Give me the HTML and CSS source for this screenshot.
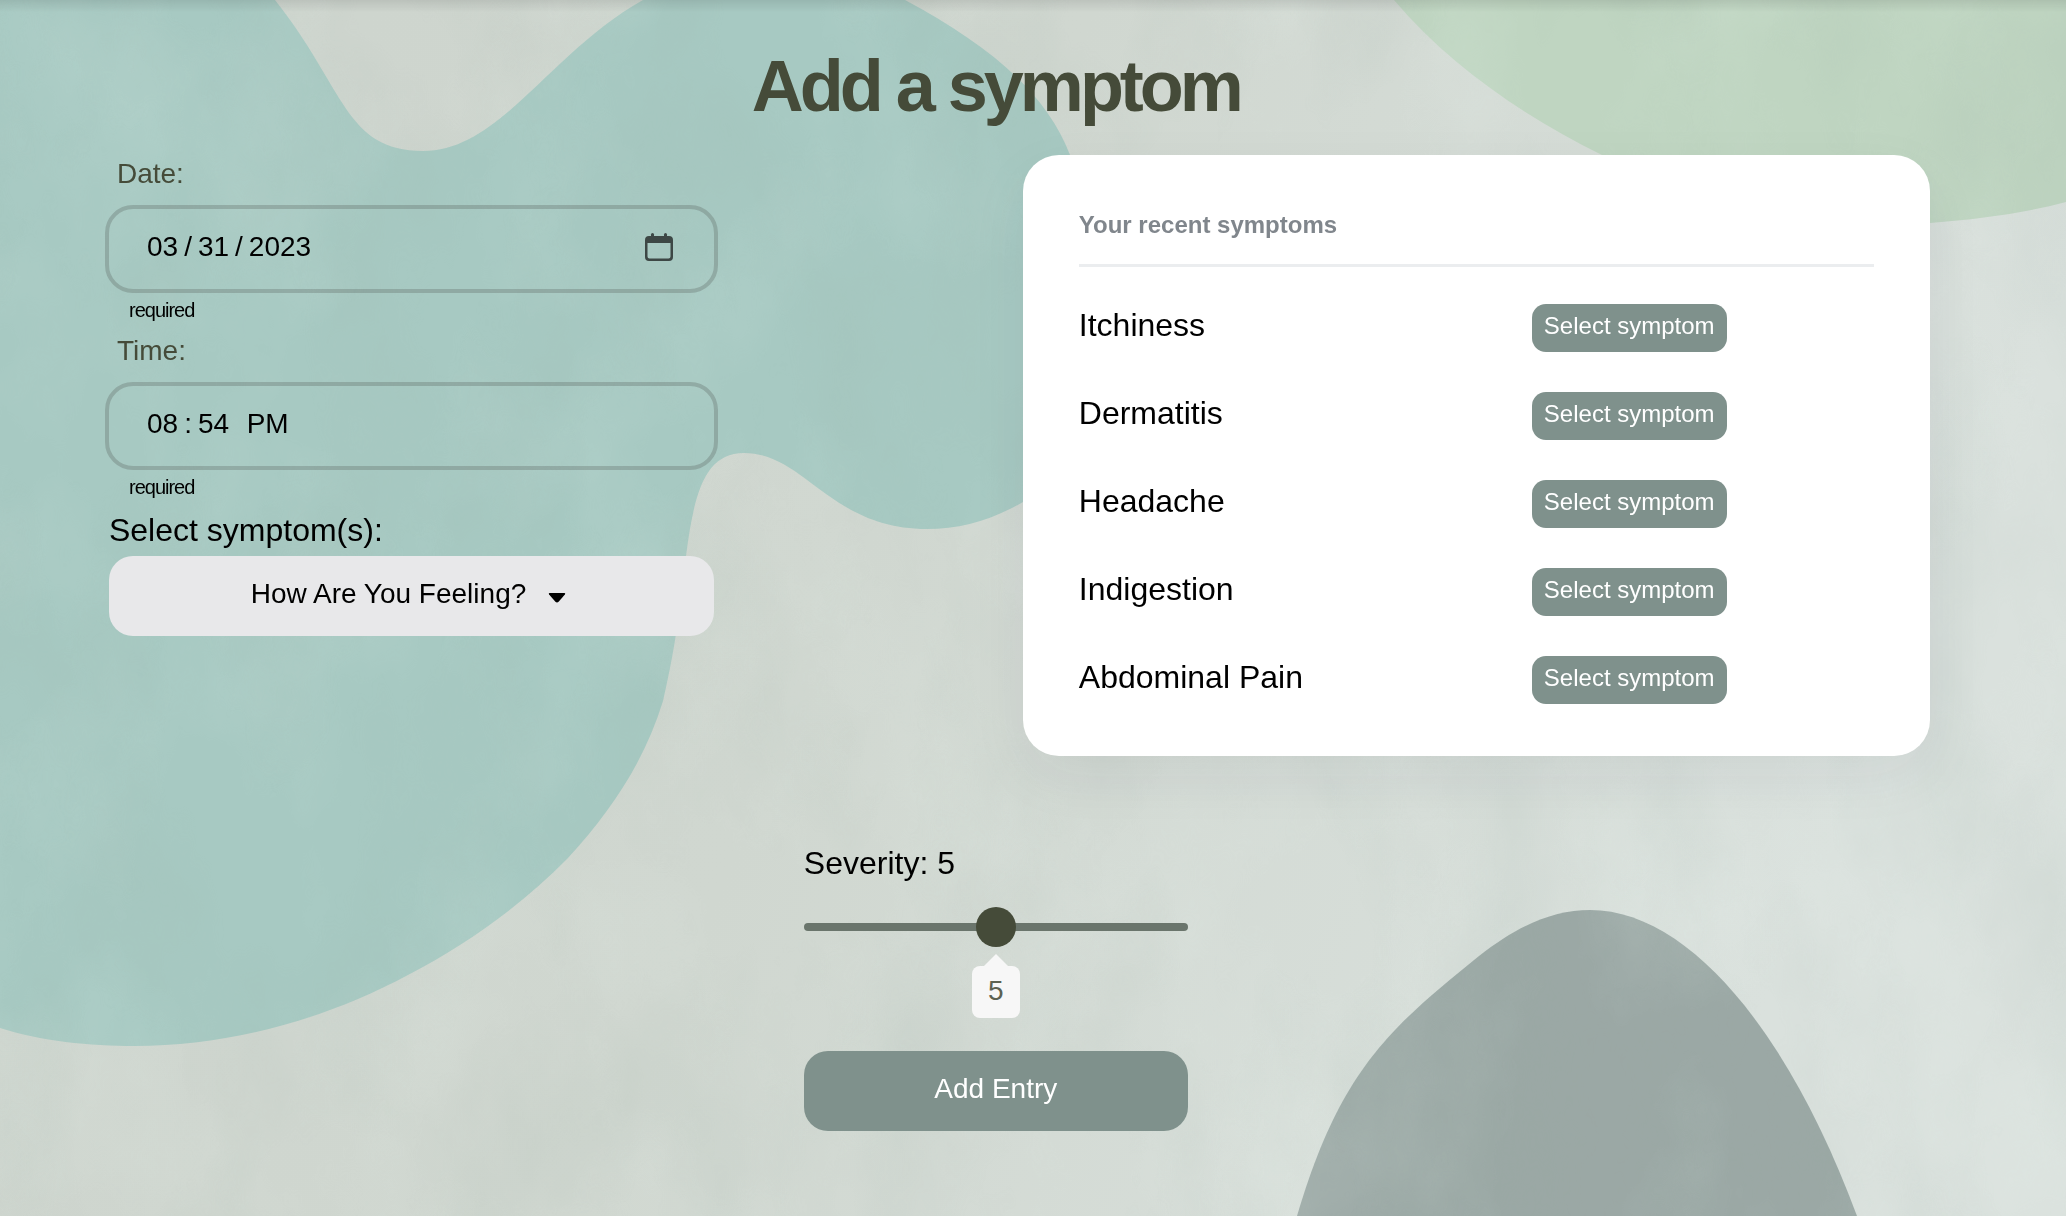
FILE: index.html
```html
<!DOCTYPE html>
<html lang="en">
<head>
<meta charset="utf-8">
<meta name="viewport" content="width=device-width, initial-scale=1">
<title>Add a symptom</title>
<link rel="stylesheet" href="styles.css">
</head>
<body>
<svg class="backdrop" viewBox="0 0 2066 1216" preserveAspectRatio="xMidYMid slice" aria-hidden="true">
  <defs>
    <linearGradient id="paper" x1="0" y1="0" x2="1" y2="0.25">
      <stop offset="0" stop-color="#cdd4cd"/>
      <stop offset="0.5" stop-color="#d0d7d0"/>
      <stop offset="1" stop-color="#dae1dd"/>
    </linearGradient>
    <filter id="lightWash" x="0" y="0" width="100%" height="100%">
      <feTurbulence type="fractalNoise" baseFrequency="0.006 0.004" numOctaves="5" seed="8"/>
      <feColorMatrix values="0 0 0 0 0.9  0 0 0 0 1  0 0 0 0 0.95  1.6 0 0 0 -0.7"/>
    </filter>
    <filter id="darkWash" x="0" y="0" width="100%" height="100%">
      <feTurbulence type="fractalNoise" baseFrequency="0.007 0.004" numOctaves="5" seed="21"/>
      <feColorMatrix values="0 0 0 0 0.3  0 0 0 0 0.4  0 0 0 0 0.35  0 1.2 0 0 -0.5"/>
    </filter>
  </defs>
  <rect width="2066" height="1216" fill="url(#paper)"/>
  <path fill="#a7c9c2" d="M0 0H275C345 88 345 151 423 151C500 151 550 52 643 0H905C985 43 1045 90 1070 155C1130 300 1100 440 1023 502C990 521 960 529 927 529C830 529 805 453 744 453C704 453 694 495 686 556C679 612 677 640 663 701C645 760 612 810 568 858C520 907 465 945 408 975C320 1022 225 1046 135 1046C90 1046 40 1041 0 1028Z"/>
  <path fill="#bfd5c1" d="M1394 0C1450 66 1525 117 1602 155C1700 205 1830 238 1930 223C1980 219 2025 213 2066 202V0Z"/>
  <path fill="#9ba8a5" d="M1297 1216C1340 1070 1390 1028 1479 956C1520 924 1555 910 1590 910C1690 910 1790 1035 1857 1216Z"/>
  <rect width="2066" height="1216" filter="url(#lightWash)" opacity="0.16"/>
  <rect width="2066" height="1216" filter="url(#darkWash)" opacity="0.2"/>
</svg>

<main class="page">
  <h1 class="title">Add a symptom</h1>
  <form class="entry">
    <div class="columns">
      <div class="fields">
        <div class="field">
          <label class="field-label" for="date">Date:</label>
          <input class="field-input" id="date" type="date" value="2023-03-31" required aria-describedby="date-note">
          <p class="field-note" id="date-note">required</p>
        </div>
        <div class="field">
          <label class="field-label" for="time">Time:</label>
          <input class="field-input" id="time" type="time" value="20:54" required aria-describedby="time-note">
          <p class="field-note" id="time-note">required</p>
        </div>
        <div class="picker">
          <label class="picker-label" for="symptom">Select symptom(s):</label>
          <select class="picker-select" id="symptom">
            <option>How Are You Feeling?</option>
          </select>
        </div>
      </div>

      <section class="card">
        <h2 class="card-title">Your recent symptoms</h2>
        <ul class="recent">
          <li class="recent-row"><span>Itchiness</span><button class="pick" type="button">Select symptom</button></li>
          <li class="recent-row"><span>Dermatitis</span><button class="pick" type="button">Select symptom</button></li>
          <li class="recent-row"><span>Headache</span><button class="pick" type="button">Select symptom</button></li>
          <li class="recent-row"><span>Indigestion</span><button class="pick" type="button">Select symptom</button></li>
          <li class="recent-row"><span>Abdominal Pain</span><button class="pick" type="button">Select symptom</button></li>
        </ul>
      </section>
    </div>

    <div class="severity">
      <label class="severity-label" for="severity">Severity: 5</label>
      <input class="slider" id="severity" type="range" min="0" max="10" value="5">
      <output class="bubble" for="severity">5</output>
      <button class="submit" type="submit">Add Entry</button>
    </div>
  </form>
</main>
</body>
</html>
```

FILE: styles.css
```css
:root {
  --olive: #454b39;
  --sage: #7f918c;
}

*, *::before, *::after { box-sizing: border-box; }

body {
  margin: 0;
  min-height: 100vh;
  font-family: "Liberation Sans", Arial, Helvetica, sans-serif;
  font-size: 28px;
  line-height: 32px;
  color: #000;
}

/* soft shadow cast by the bar above the page */
body::before {
  content: "";
  position: absolute;
  inset: 0 0 auto;
  height: 12px;
  background: linear-gradient(rgba(0, 0, 0, .09), rgba(0, 0, 0, 0));
}

.backdrop {
  position: fixed;
  inset: 0;
  z-index: -1;
  width: 100%;
  height: 100%;
}

.page { padding: 46px 6.6% 80px 3%; }

.title {
  margin: 0 0 29px;
  font-size: 72px;
  line-height: 80px;
  font-weight: 700;
  letter-spacing: -4px;
  text-align: center;
  color: var(--olive);
}

.columns {
  display: flex;
  justify-content: space-between;
  align-items: flex-start;
  padding-left: 43px;
}

.fields { width: 33.6%; padding-top: 3px; }

.field { margin-bottom: 13px; }

.field-label {
  display: block;
  margin: 0 0 15px 12px;
  color: var(--olive);
}

.field-input {
  display: block;
  width: 100%;
  height: 88px;
  padding: 0 41px 4px 38px;
  border: 4px solid rgba(70, 75, 70, .25);
  border-radius: 28px;
  background: transparent;
  font: inherit;
  color: #000;
}

.field-input::-webkit-datetime-edit { padding: 0; }
.field-input::-webkit-datetime-edit-fields-wrapper { padding: 0; }
.field-input::-webkit-datetime-edit-month-field,
.field-input::-webkit-datetime-edit-day-field,
.field-input::-webkit-datetime-edit-year-field,
.field-input::-webkit-datetime-edit-hour-field,
.field-input::-webkit-datetime-edit-minute-field,
.field-input::-webkit-datetime-edit-ampm-field { padding: 0; }
.field-input::-webkit-datetime-edit-text { padding: 0 6px; }
.field-input::-webkit-calendar-picker-indicator {
  width: 28px;
  height: 28px;
  padding: 0;
  background: url("data:image/svg+xml,%3Csvg xmlns='http://www.w3.org/2000/svg' width='28' height='28' fill='%233d4745'%3E%3Crect x='6' width='3' height='6' rx='1.5'/%3E%3Crect x='19' width='3' height='6' rx='1.5'/%3E%3Cpath fill-rule='evenodd' d='M4 3h20a4 4 0 0 1 4 4V24a4 4 0 0 1-4 4H4a4 4 0 0 1-4-4V7a4 4 0 0 1 4-4zM2.5 10V23.500a2 2 0 0 0 2 2h19a2 2 0 0 0 2-2V10z'/%3E%3C/svg%3E") center / 28px 28px no-repeat;
}
.field-input[type="time"]::-webkit-calendar-picker-indicator { display: none; }

.field-note {
  margin: 5px 0 0 24px;
  font-size: 20px;
  line-height: 24px;
  letter-spacing: -1px;
}

.picker { padding: 0 4px; }

.picker-label,
.severity-label {
  display: block;
  font-size: 32px;
  line-height: 36px;
}

.picker-select {
  display: block;
  width: 100%;
  height: 80px;
  margin-top: 8px;
  padding: 0 46px 4px 0;
  border: 0;
  border-radius: 24px;
  appearance: none;
  background: #e8e8ea url("data:image/svg+xml,%3Csvg xmlns='http://www.w3.org/2000/svg' width='18' height='12'%3E%3Cpath d='M1.5 1h15q1.3 .2 .4 1.5l-6.3 7.2q-1.6 1.6-3.2 0L1.1 2.5Q.2 1.2 1.5 1z'/%3E%3C/svg%3E") no-repeat calc(50% + 145px) 36px;
  font: inherit;
  color: #000;
  text-align: center;
  text-align-last: center;
}

.card {
  width: 49.7%;
  padding: 54px 56px 32px;
  border-radius: 36px;
  background: #fff;
  box-shadow: 0 20px 60px rgba(40, 40, 70, .06);
}

.card-title {
  margin: 0;
  padding-bottom: 23px;
  border-bottom: 3px solid #ebedef;
  font-size: 24px;
  line-height: 32px;
  font-weight: 700;
  color: #80868c;
}

.recent {
  margin: 17px 0 0;
  padding: 0;
  list-style: none;
}

.recent-row {
  display: grid;
  grid-template-columns: 57% 1fr;
  align-items: center;
  height: 88px;
  font-size: 32px;
  line-height: 40px;
}

.recent-row span { padding-bottom: 6px; }

.pick {
  justify-self: start;
  height: 48px;
  padding: 0 12px 4px;
  border: 0;
  border-radius: 14px;
  background: var(--sage);
  font: inherit;
  font-size: 24px;
  color: #fff;
}

.severity {
  display: flex;
  flex-direction: column;
  width: 384px;
  margin: 89px auto 0;
}

.slider {
  width: 100%;
  height: 40px;
  margin: 26px 0 19px;
  appearance: none;
  background: transparent;
}

.slider::-webkit-slider-runnable-track {
  height: 8px;
  border-radius: 4px;
  background: #6a756c;
}

.slider::-webkit-slider-thumb {
  appearance: none;
  width: 40px;
  height: 40px;
  margin-top: -16px;
  border-radius: 50%;
  background: var(--olive);
}

.bubble {
  position: relative;
  align-self: center;
  width: 48px;
  height: 52px;
  padding-top: 9px;
  border-radius: 8px;
  background: #f7f7f7;
  text-align: center;
  color: #5c6152;
}

.bubble::before {
  content: "";
  position: absolute;
  left: 12px;
  bottom: 100%;
  border: 12px solid transparent;
  border-top: 0;
  border-bottom-color: #f7f7f7;
}

.submit {
  height: 80px;
  margin-top: 33px;
  padding: 0 0 4px;
  border: 0;
  border-radius: 24px;
  background: var(--sage);
  font: inherit;
  color: #fff;
}
```
